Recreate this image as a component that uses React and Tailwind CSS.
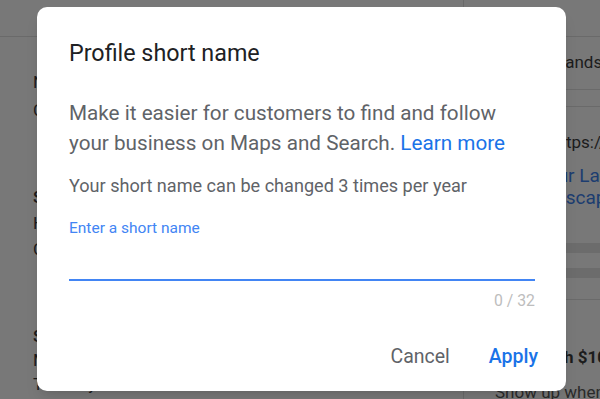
import React from "react";

const font = { fontFamily: "Roboto, 'Noto Sans', sans-serif" };

const LeftColumn = () => (
  <div className="w-[463px] shrink-0 flex flex-col text-[17px] text-[#1c1c1c]">
    <div className="h-[37px] shrink-0 border-b border-[#6a6a6a] pl-[100px] overflow-hidden">
      <div className="-mt-[19px] leading-[20px] whitespace-nowrap">Manage your app listings</div>
    </div>
    <div className="pl-[33px] pt-[34px] flex flex-col gap-[6px] leading-[22px]">
      <span>Name</span>
      <span>Colorado Landscaping</span>
    </div>
    <div className="pl-[33px] pt-[65px] flex flex-col gap-[4px] leading-[22px]">
      <span className="font-medium">Short name</span>
      <span>Help customers find you</span>
      <span>Create short name</span>
    </div>
    <div className="pl-[33px] pt-[65px] flex flex-col gap-[2px] leading-[22px]">
      <span className="font-medium">Special hours</span>
      <span>Monday</span>
      <div className="flex whitespace-nowrap">
        <span className="w-[142px]">Tuesday</span>
        <span>8:00 AM – 8:00 PM</span>
      </div>
    </div>
  </div>
);

const RightColumn = () => (
  <div className="flex-1 border-l border-[#6a6a6a] flex flex-col text-[17px] text-[#1c1c1c] overflow-hidden">
    <div className="h-[37px] shrink-0 border-b border-[#6a6a6a]" />
    <div className="h-[53px] shrink-0 border-b border-[#6a6a6a] flex items-center pl-[92px] whitespace-nowrap">
      Landscaping
    </div>
    <div className="h-[17px] shrink-0 border-b border-[#6a6a6a]" />
    <div className="pl-[87px] pt-[24px] whitespace-nowrap leading-[22px]">https://colorado</div>
    <div className="pt-[12px] whitespace-nowrap leading-[22px] text-[#1c3d70] text-[19px]">
      <div className="pl-[72px]">Your Landscaping</div>
      <div className="pl-[60px]">Landscaping</div>
    </div>
    <div className="mt-[34px] h-[10px] shrink-0 bg-[#6c6c6c]" />
    <div className="mt-[15px] h-[10px] shrink-0 bg-[#6c6c6c]" />
    <div className="mt-[21px] border-b border-[#6a6a6a]" />
    <div className="pl-[62px] pt-[46px] whitespace-nowrap font-bold leading-[22px]">Reach $100</div>
    <div className="pl-[31px] pt-[13px] whitespace-nowrap text-[#2a2a2a] leading-[22px]">Show up when</div>
  </div>
);

export default function App() {
  return (
    <div style={font} className="relative w-[600px] h-[399px] overflow-hidden bg-[#787878]">
      <div className="flex h-full">
        <LeftColumn />
        <RightColumn />
      </div>

      {/* Dialog */}
      <div className="absolute left-[37px] top-[7px] w-[529px] h-[384px] bg-white rounded-[10px] shadow-lg flex flex-col px-[32px]">
        <h2 className="text-[23.3px] leading-[28px] text-[#202124] pt-[32px]">Profile short name</h2>
        <p className="mt-[31px] text-[20.7px] leading-[30px] text-[#5f6368]">
          Make it easier for customers to find and follow your business on Maps and Search.{" "}
          <a className="text-[#1a73e8]">Learn more</a>
        </p>
        <p className="mt-[16px] text-[18.1px] leading-[24px] text-[#5f6368]">
          Your short name can be changed 3 times per year
        </p>
        <div className="mt-[20px] w-[466px]">
          <label className="block text-[15.5px] leading-[20px] text-[#4285f4]">Enter a short name</label>
          <div className="h-[41px]" />
          <div className="h-[2px] bg-[#4285f4]" />
          <div className="mt-[11px] text-right text-[15.8px] leading-[18px] text-[#bdbdbd]">0 / 32</div>
        </div>
        <div className="mt-auto mb-[23px] -mr-[4px] flex justify-end gap-[39px] text-[19.5px] leading-[22px]">
          <button className="text-[#5f6368]">Cancel</button>
          <button className="text-[#1a73e8] font-medium">Apply</button>
        </div>
      </div>
    </div>
  );
}
